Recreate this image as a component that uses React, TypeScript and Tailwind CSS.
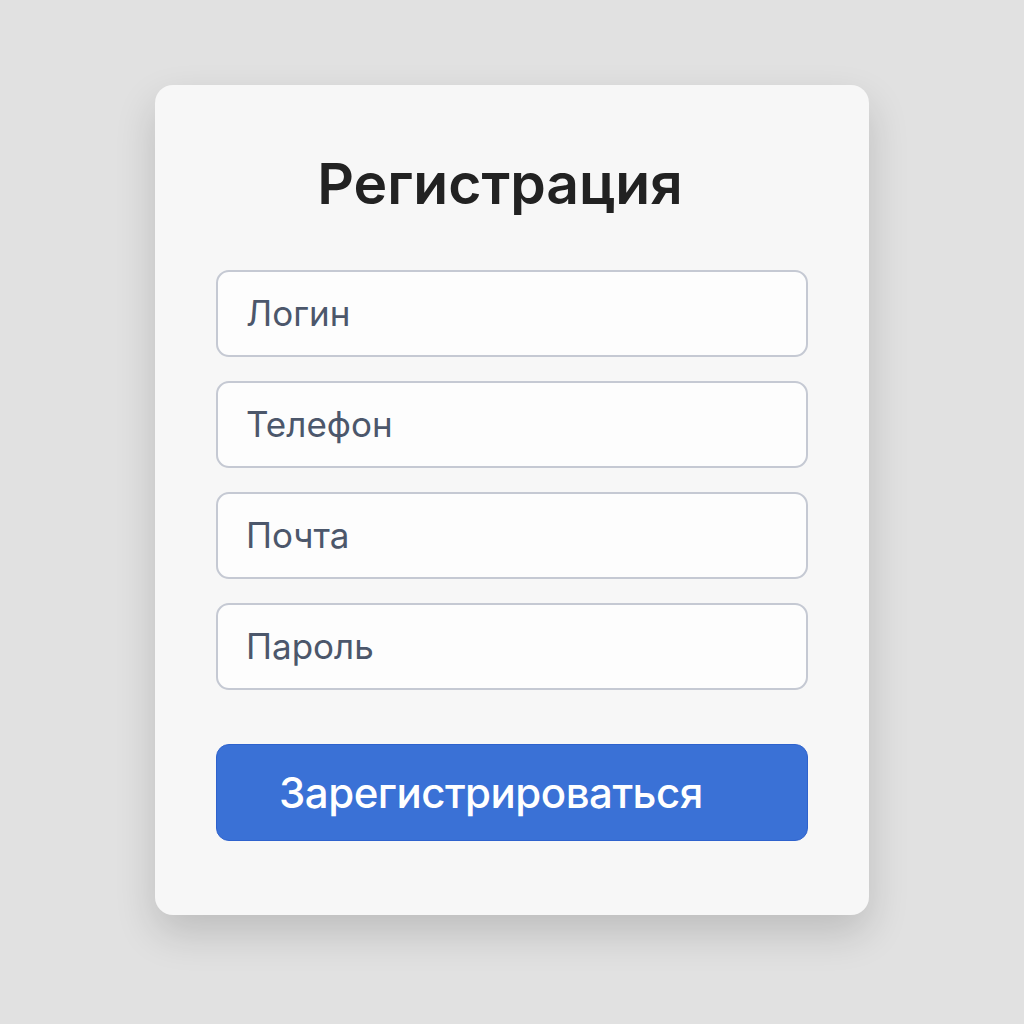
import React from "react";

const fields = ["Логин", "Телефон", "Почта", "Пароль"];

export default function App() {
  return (
    <div
      className="min-h-screen w-full bg-[#e1e1e1] flex justify-center pt-[85px]"
      style={{ fontFamily: 'Inter, "Liberation Sans", Arial, sans-serif' }}
    >
      <div className="w-[714px] h-[830px] bg-[#f7f7f7] rounded-[18px] shadow-[0_18px_40px_rgba(0,0,0,0.16)] px-[61px] flex flex-col">
        <h1 className="mt-[68px] h-[60px] flex items-center justify-center pr-6 text-[57px] leading-none font-semibold text-[#222]">
          Регистрация
        </h1>
        <div className="mt-[57px] flex flex-col gap-[24px]">
          {fields.map((f) => (
            <div
              key={f}
              className="h-[87px] bg-[#fdfdfd] border-2 border-[#c5c9d3] rounded-[13px] flex items-center pl-[28px] text-[35px] text-[#4c576b]"
            >
              {f}
            </div>
          ))}
        </div>
        <button className="mt-[54px] h-[97px] w-full bg-[#3a71d6] border border-[#2e62cd] rounded-[13px] flex items-center pl-[62px] text-[42px] font-medium text-white tracking-[-0.5px]">
          Зарегистрироваться
        </button>
      </div>
    </div>
  );
}
